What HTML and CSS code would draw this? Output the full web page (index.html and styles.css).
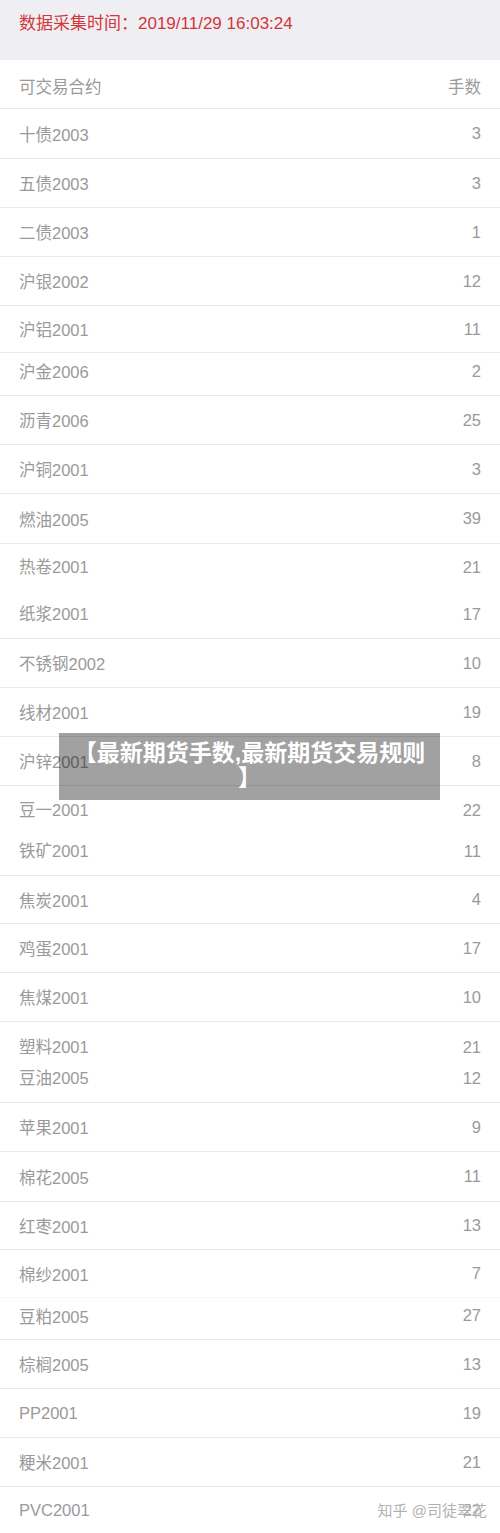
FILE: index.html
```html
<!DOCTYPE html>
<html lang="zh-CN">
<head>
	<meta charset="UTF-8">
	<title>最新期货手数</title>
<link rel="stylesheet" href="styles.css">
</head>

<body>
<div class="page">
	<div class="stamp">数据采集时间：2019/11/29 16:03:24</div>

	<div class="list">
		<div class="row head"><span>可交易合约</span><span>手数</span></div>
		<div class="row tall"><span>十债2003</span><span>3</span></div>
		<div class="row"><span>五债2003</span><span>3</span></div>
		<div class="row"><span>二债2003</span><span>1</span></div>
		<div class="row"><span>沪银2002</span><span>12</span></div>
		<div class="row h47"><span>沪铝2001</span><span>11</span></div>
		<div class="row h43 up"><span>沪金2006</span><span>2</span></div>
		<div class="row"><span>沥青2006</span><span>25</span></div>
		<div class="row"><span>沪铜2001</span><span>3</span></div>
		<div class="row tall"><span>燃油2005</span><span>39</span></div>
		<div class="group g47">
			<div class="line"><span>热卷2001</span><span>21</span></div>
			<div class="line"><span>纸浆2001</span><span>17</span></div>
		</div>
		<div class="row"><span>不锈钢2002</span><span>10</span></div>
		<div class="row"><span>线材2001</span><span>19</span></div>
		<div class="row"><span>沪锌2001</span><span>8</span></div>
		<div class="group g41">
			<div class="line"><span>豆一2001</span><span>22</span></div>
			<div class="line"><span>铁矿2001</span><span>11</span></div>
		</div>
		<div class="row short"><span>焦炭2001</span><span>4</span></div>
		<div class="row"><span>鸡蛋2001</span><span>17</span></div>
		<div class="row"><span>焦煤2001</span><span>10</span></div>
		<div class="group g31">
			<div class="line"><span>塑料2001</span><span>21</span></div>
			<div class="line"><span>豆油2005</span><span>12</span></div>
		</div>
		<div class="row"><span>苹果2001</span><span>9</span></div>
		<div class="row tall"><span>棉花2005</span><span>11</span></div>
		<div class="row short"><span>红枣2001</span><span>13</span></div>
		<div class="row short faint"><span>棉纱2001</span><span>7</span></div>
		<div class="row h42 up"><span>豆粕2005</span><span>27</span></div>
		<div class="row"><span>棕榈2005</span><span>13</span></div>
		<div class="row"><span>PP2001</span><span>19</span></div>
		<div class="row"><span>粳米2001</span><span>21</span></div>
		<div class="row last"><span>PVC2001</span><span>22</span></div>
	</div>

	<div class="banner">【最新期货手数,最新期货交易规则】</div>
	<div class="mark">知乎 @司徒翠花</div>
</div>
</body>
</html>
```

FILE: styles.css
```css
* { margin:0; padding:0; box-sizing:border-box;}
body { background:#fff; font-family:"Liberation Sans", "Noto Sans CJK SC", sans-serif;}
.page { position:relative; width:500px; height:1533px; overflow:hidden;}

.stamp { height:60px; background:#efeef3; color:#d3363a; font-size:17px; line-height:48px; padding:0 19px;}

.list { color:#9a9a9a; font-size:16.5px;}
.row { display:flex; justify-content:space-between; align-items:center; height:49px; padding:0 19px; border-bottom:1px solid #e9e9e9;}
.row.head { padding-top:3px;}
.row.tall { height:50px;}
.row.short { height:48px;}
.row.h47 { height:47px;}
.row.h43 { height:43px;}
.row.h42 { height:42px;}
.row.up { padding-bottom:6px;}
.row.faint { border-bottom-color:#f6f6f6;}
.row.last { height:46px; border-bottom:none;}

.group { padding:0 19px; border-bottom:1px solid #e9e9e9;}
.group .line { display:flex; justify-content:space-between;}
.g47 .line { line-height:47px;}
.g41 { padding-top:4px; padding-bottom:3px;}
.g41 .line { line-height:41px;}
.g31 { padding-top:10px; padding-bottom:8px;}
.g31 .line { line-height:31px;}

.banner { position:absolute; left:59px; top:733px; width:381px; padding:8px 12px 9px; background:rgba(0,0,0,0.37); color:#fff; font-size:23px; font-weight:bold; line-height:25px; text-align:center; line-break:anywhere;}
.mark { position:absolute; right:13px; top:1501px; color:rgba(150,150,150,0.75); font-size:15px; line-height:20px; text-shadow:0 0 2px #fff;}
```
